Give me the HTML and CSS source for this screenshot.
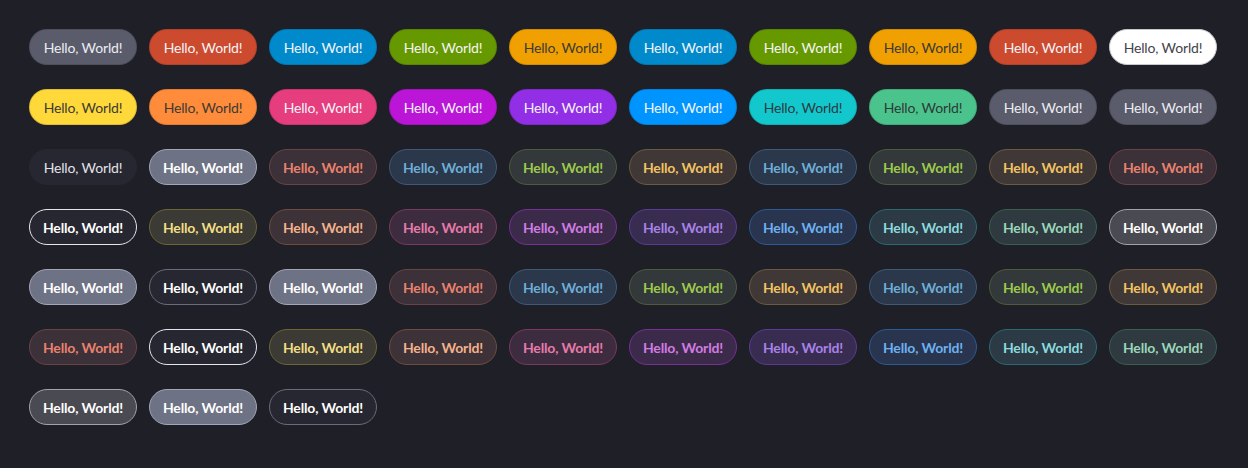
FILE: index.html
```html
<!DOCTYPE html>
<html>
<head>
<meta charset="utf-8">
<link rel="stylesheet" href="styles.css">
</head>
<body>
<div class="grid">
  <button class="b s-gray">Hello, World!</button>
  <button class="b s-red">Hello, World!</button>
  <button class="b s-blue">Hello, World!</button>
  <button class="b s-green">Hello, World!</button>
  <button class="b s-orange">Hello, World!</button>
  <button class="b s-blue">Hello, World!</button>
  <button class="b s-green">Hello, World!</button>
  <button class="b s-orange">Hello, World!</button>
  <button class="b s-red">Hello, World!</button>
  <button class="b s-white">Hello, World!</button>

  <button class="b s-yellow">Hello, World!</button>
  <button class="b s-amber">Hello, World!</button>
  <button class="b s-pink">Hello, World!</button>
  <button class="b s-magenta">Hello, World!</button>
  <button class="b s-purple">Hello, World!</button>
  <button class="b s-sky">Hello, World!</button>
  <button class="b s-cyan">Hello, World!</button>
  <button class="b s-mint">Hello, World!</button>
  <button class="b s-gray">Hello, World!</button>
  <button class="b s-gray">Hello, World!</button>

  <button class="b s-dark">Hello, World!</button>
  <button class="b t t-slate">Hello, World!</button>
  <button class="b t t-red">Hello, World!</button>
  <button class="b t t-blue">Hello, World!</button>
  <button class="b t t-green">Hello, World!</button>
  <button class="b t t-gold">Hello, World!</button>
  <button class="b t t-blue">Hello, World!</button>
  <button class="b t t-green">Hello, World!</button>
  <button class="b t t-gold">Hello, World!</button>
  <button class="b t t-red">Hello, World!</button>

  <button class="b t t-outline">Hello, World!</button>
  <button class="b t t-yellow">Hello, World!</button>
  <button class="b t t-peach">Hello, World!</button>
  <button class="b t t-pink">Hello, World!</button>
  <button class="b t t-magenta">Hello, World!</button>
  <button class="b t t-purple">Hello, World!</button>
  <button class="b t t-sky">Hello, World!</button>
  <button class="b t t-cyan">Hello, World!</button>
  <button class="b t t-mint">Hello, World!</button>
  <button class="b t t-neutral">Hello, World!</button>

  <button class="b t t-slate">Hello, World!</button>
  <button class="b t t-ghost">Hello, World!</button>
  <button class="b t t-slate">Hello, World!</button>
  <button class="b t t-red">Hello, World!</button>
  <button class="b t t-blue">Hello, World!</button>
  <button class="b t t-green">Hello, World!</button>
  <button class="b t t-gold">Hello, World!</button>
  <button class="b t t-blue">Hello, World!</button>
  <button class="b t t-green">Hello, World!</button>
  <button class="b t t-gold">Hello, World!</button>

  <button class="b t t-red">Hello, World!</button>
  <button class="b t t-outline">Hello, World!</button>
  <button class="b t t-yellow">Hello, World!</button>
  <button class="b t t-peach">Hello, World!</button>
  <button class="b t t-pink">Hello, World!</button>
  <button class="b t t-magenta">Hello, World!</button>
  <button class="b t t-purple">Hello, World!</button>
  <button class="b t t-sky">Hello, World!</button>
  <button class="b t t-cyan">Hello, World!</button>
  <button class="b t t-mint">Hello, World!</button>

  <button class="b t t-neutral">Hello, World!</button>
  <button class="b t t-slate">Hello, World!</button>
  <button class="b t t-ghost">Hello, World!</button>
</div>
</body>
</html>
```

FILE: styles.css
```css
html, body {
  margin: 0;
  padding: 0;
  background: #1f1f28;
}

.grid {
  display: grid;
  grid-template-columns: repeat(10, 108px);
  column-gap: 12px;
  row-gap: 24px;
  padding: 29px 0 0 29px;
}

.b {
  box-sizing: border-box;
  width: 108px;
  height: 36px;
  border-radius: 18px;
  border: 1px solid rgba(0, 0, 0, 0.12);
  padding: 0;
  font-family: Lato, "Open Sans", sans-serif;
  font-size: 14px;
  letter-spacing: -0.15px;
  font-weight: 400;
  color: #f4f4f8;
  display: flex;
  align-items: center;
  justify-content: center;
  white-space: nowrap;
}

.s-gray { background: #5a5c6c; color: #ececf2; }
.s-red { background: #cc4a2e; }
.s-blue { background: #008acc; }
.s-green { background: #669900; }
.s-orange { background: #f0a000; color: #3d3a36; }
.s-white { background: #ffffff; color: #44444c; border-color: #c8c8cc; }
.s-yellow { background: #ffd83a; color: #3d3a36; }
.s-amber { background: #ff8c3a; color: #3d3a36; }
.s-pink { background: #e63d7e; }
.s-magenta { background: #bb16d8; }
.s-purple { background: #922ee6; }
.s-sky { background: #0094ff; }
.s-cyan { background: #12c8cc; color: #2c3a44; }
.s-mint { background: #4ac48c; color: #2e3a38; }
.s-dark { background: #272731; border-color: #272731; color: #e2e2e8; }

.t { font-weight: 700; }

.t-slate { background: #6e7285; border-color: #a2a6b6; color: #ffffff; }
.t-ghost { background: #272731; border-color: #6a6c7c; color: #ffffff; }
.t-outline { background: #272731; border-color: #e6e6ea; color: #ffffff; }
.t-neutral { background: #4a4a52; border-color: #a2a2aa; color: #ffffff; }
.t-red { background: #3c3039; border-color: #6c4344; color: #ea826e; }
.t-blue { background: #2b374a; border-color: #3f5a78; color: #6eaed6; }
.t-green { background: #33393a; border-color: #4f5b3c; color: #9ec94c; }
.t-gold { background: #3f3837; border-color: #6b5b3d; color: #f3c261; }
.t-yellow { background: #3b3a34; border-color: #6e6434; color: #f2dd83; }
.t-peach { background: #3d3237; border-color: #6f4c3e; color: #f4b18c; }
.t-pink { background: #3d2c40; border-color: #7a3a5b; color: #e87ba9; }
.t-magenta { background: #3c2a4b; border-color: #7a2f97; color: #d27ce2; }
.t-purple { background: #382d50; border-color: #5b3b97; color: #a982e9; }
.t-sky { background: #29354f; border-color: #2b5b97; color: #6db1f1; }
.t-cyan { background: #2b3a45; border-color: #2b6a71; color: #8cd9dd; }
.t-mint { background: #2e3a3f; border-color: #3b5e53; color: #9ad5ba; }
```
